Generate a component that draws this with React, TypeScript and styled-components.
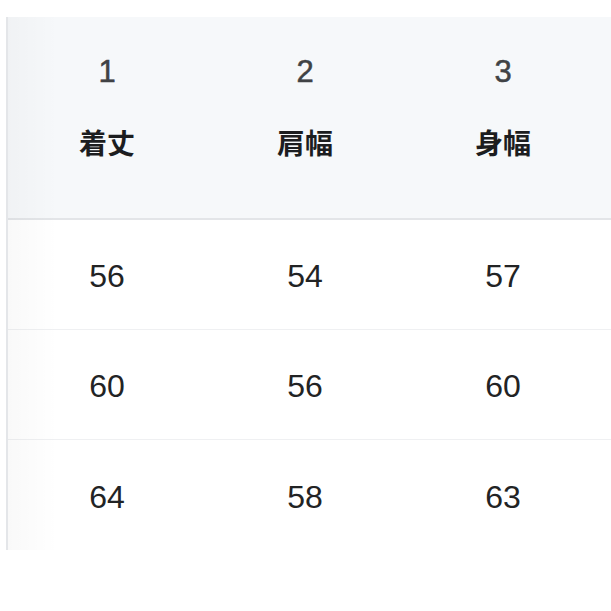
import styled, { createGlobalStyle } from "styled-components";

const GlobalStyle = createGlobalStyle`
  html, body {
    margin: 0;
    background: #ffffff;
    overflow: hidden;
  }
`;

const columns = [
  { no: "1", label: "着丈" },
  { no: "2", label: "肩幅" },
  { no: "3", label: "身幅" },
];

const rows = [
  ["56", "54", "57"],
  ["60", "56", "60"],
  ["64", "58", "63"],
];

const Page = styled.div`
  width: 611px;
  height: 611px;
  padding: 17px 0 0 6px;
  box-sizing: border-box;
  overflow: hidden;
  font-family: "Liberation Sans", "Noto Sans CJK JP", sans-serif;
`;

const Table = styled.div`
  position: relative;
  width: 640px;
  border-left: 2px solid #e4e6e9;
`;

const Shadow = styled.div`
  position: absolute;
  top: 0;
  bottom: 0;
  left: 0;
  width: 50px;
  background: linear-gradient(90deg, rgba(0, 0, 0, 0.022), rgba(0, 0, 0, 0));
  pointer-events: none;
`;

const Row = styled.div<{ $head?: boolean; $last?: boolean }>`
  display: grid;
  grid-template-columns: repeat(3, 198px);
  height: ${(p) => (p.$head ? "201px" : p.$last ? "110px" : "109px")};
  background: ${(p) => (p.$head ? "#f6f8fa" : "#ffffff")};
  border-bottom: ${(p) =>
    p.$head ? "2px solid #e3e5e8" : p.$last ? "none" : "1px solid #eff0f2"};
`;

const HeadCell = styled.div`
  display: flex;
  flex-direction: column;
  align-items: center;
  padding-top: 37px;
`;

const HeadNo = styled.span`
  font-size: 31px;
  line-height: 36px;
  color: #404245;
  -webkit-text-stroke: 0.5px #404245;
`;

const HeadLabel = styled.span`
  margin-top: 32px;
  font-family: "Noto Sans CJK JP", sans-serif;
  font-weight: 700;
  font-size: 28px;
  line-height: 40px;
  color: #1c1d1f;
`;

const Cell = styled.div`
  display: flex;
  align-items: center;
  justify-content: center;
  padding-top: 4px;
  font-size: 32px;
  color: #222324;
`;

export default function App() {
  return (
    <Page>
      <GlobalStyle />
      <Table>
        <Row $head>
          {columns.map((c) => (
            <HeadCell key={c.no}>
              <HeadNo>{c.no}</HeadNo>
              <HeadLabel>{c.label}</HeadLabel>
            </HeadCell>
          ))}
        </Row>
        {rows.map((r, i) => (
          <Row key={i} $last={i === rows.length - 1}>
            {r.map((v, j) => (
              <Cell key={j}>{v}</Cell>
            ))}
          </Row>
        ))}
        <Shadow />
      </Table>
    </Page>
  );
}
